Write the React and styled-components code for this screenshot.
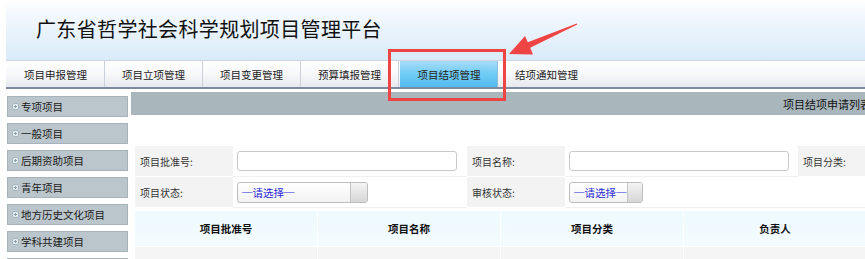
import React from 'react'
import styled, { createGlobalStyle } from 'styled-components'

const GlobalStyle = createGlobalStyle`
  body {
    margin: 0;
    background: #fff;
    overflow: hidden;
    font-family: "Noto Sans CJK SC", "Noto Sans", sans-serif;
    color: #1c1c1c;
  }
`

const tabs = ['项目申报管理', '项目立项管理', '项目变更管理', '预算填报管理', '项目结项管理', '结项通知管理']
const menu = ['专项项目', '一般项目', '后期资助项目', '青年项目', '地方历史文化项目', '学科共建项目', '其他项目']
const columns = ['项目批准号', '项目名称', '项目分类', '负责人']

function PlusBox() {
    return (
        <svg width="7" height="7" viewBox="0 0 7 7">
            <rect x="0.5" y="0.5" width="6" height="6" rx="1.5" fill="#e4ebef" stroke="#a5b6c0" />
            <path d="M2 3.5h3M3.5 2v3" stroke="#8aa0ad" strokeWidth="1" />
        </svg>
    )
}

function Select({ width }) {
    return (
        <SelectBox width={width}>
            <SelectText>─请选择─</SelectText>
            <SelectArrow />
        </SelectBox>
    )
}

export default function App() {
    return (
        <>
            <GlobalStyle />
            <Page>
                <Header>
                    <Title>广东省哲学社会科学规划项目管理平台</Title>
                </Header>
                <Nav>
                    {tabs.map((t, i) => (
                        <Tab key={t} active={i === 4} divider={i < 4}>{t}</Tab>
                    ))}
                </Nav>
                <Body>
                    <Sidebar>
                        {menu.map((m) => (
                            <MenuItem key={m}>
                                <PlusBox />
                                <span>{m}</span>
                            </MenuItem>
                        ))}
                    </Sidebar>
                    <Main>
                        <MainHeader>项目结项申请列表</MainHeader>
                        <Content>
                            <Form>
                                <Label>项目批准号:</Label>
                                <Field><TextInput /></Field>
                                <Label>项目名称:</Label>
                                <Field><TextInput /></Field>
                                <Label>项目分类:</Label>
                                <Field />
                                <Label>项目状态:</Label>
                                <Field><Select width={131} /></Field>
                                <Label>审核状态:</Label>
                                <Field><Select width={74} /></Field>
                                <Field wide />
                            </Form>
                            <Table>
                                {columns.map((c) => (
                                    <HeadCell key={c}>{c}</HeadCell>
                                ))}
                                {columns.map((c) => (
                                    <BodyCell key={c} />
                                ))}
                            </Table>
                        </Content>
                    </Main>
                </Body>
                <Marks width="865" height="259" viewBox="0 0 865 259">
                    <rect x="389.5" y="50.5" width="115" height="49" fill="none" stroke="#ef4444" strokeWidth="3" />
                    <polygon
                        points="509,54 525,36 527.8,42.3 576.8,23.4 577.3,24.6 530.2,47.7 533,54.5"
                        fill="#ef4444"
                    />
                </Marks>
            </Page>
        </>
    )
}

const Page = styled.div`
  position: relative;
  width: 872px;
  height: 259px;
  padding-left: 6px;
  box-sizing: border-box;
  overflow: hidden;
`

const Header = styled.div`
  height: 60px;
  background: linear-gradient(#ffffff 0%, #f1f7fd 30%, #d9eaf9 100%);
  display: flex;
  align-items: center;
`

const Title = styled.h1`
  margin: 0 0 4px 30px;
  font-size: 20px;
  font-weight: 400;
  letter-spacing: 0.35px;
  color: #111;
`

const Nav = styled.div`
  height: 26px;
  display: flex;
  padding-left: 1px;
  border-top: 1px solid #cdd6e0;
  border-bottom: 2px solid #7d899e;
  background: linear-gradient(#ffffff 0%, #f7f8fa 50%, #e6e9ef 100%);
`

const Tab = styled.div`
  flex: none;
  width: ${(p) => (p.active ? '98px' : '97px')};
  margin-left: ${(p) => (p.active ? '1px' : '0')};
  display: flex;
  align-items: center;
  justify-content: center;
  font-size: 10.5px;
  color: #222;
  border-right: ${(p) => (p.divider ? '1px solid #c9d0da' : '0')};
  background: ${(p) => (p.active ? 'linear-gradient(#a8dcf7 0%, #74cdf6 45%, #52bcef 100%)' : 'transparent')};
  box-shadow: ${(p) => (p.active ? 'inset -1px 0 0 #8ebcd8' : 'none')};
`

const Body = styled.div`
  display: flex;
  margin-top: 3px;
`

const Sidebar = styled.div`
  flex: none;
  width: 121px;
  margin-left: 1px;
  padding-top: 4px;
  display: flex;
  flex-direction: column;
  gap: 6px;
`

const MenuItem = styled.div`
  flex: none;
  height: 21px;
  box-sizing: border-box;
  display: flex;
  align-items: center;
  gap: 2px;
  padding-left: 4px;
  font-size: 10.5px;
  color: #1a1a1a;
  white-space: nowrap;
  background: #bac6cc;
  border: 1px solid #a6b3ba;
`

const Main = styled.div`
  flex: 1;
  min-width: 0;
  margin-left: 3px;
`

const MainHeader = styled.div`
  height: 23px;
  background: #a9b7bd;
  display: flex;
  align-items: center;
  justify-content: flex-end;
  padding-right: 1px;
  font-size: 11px;
  color: #111;
  white-space: nowrap;
`

const Content = styled.div`
  padding: 31px 0 0 4px;
`

const Form = styled.div`
  display: grid;
  grid-template-columns: 98px 234px 98px 233px 98px 1fr;
  grid-auto-rows: 31px;
`

const Label = styled.div`
  display: flex;
  align-items: center;
  padding-left: 5px;
  font-size: 10px;
  color: #333;
  white-space: nowrap;
  background: #f3f3f3;
  border-bottom: 1px solid #fff;
`

const Field = styled.div`
  display: flex;
  align-items: center;
  padding-left: 4px;
  border-bottom: 1px solid #f0f0f0;
  grid-column: ${(p) => (p.wide ? 'span 2' : 'auto')};
`

const TextInput = styled.div`
  width: 220px;
  height: 20px;
  box-sizing: border-box;
  border: 1px solid #c9c9c9;
  border-radius: 3px;
  background: #fff;
`

const SelectBox = styled.div`
  width: ${(p) => p.width}px;
  height: 21px;
  box-sizing: border-box;
  display: flex;
  border: 1px solid #bdbdbd;
  border-radius: 3px;
  overflow: hidden;
  background: linear-gradient(#ffffff, #f2f2f2);
`

const SelectText = styled.div`
  flex: 1;
  display: flex;
  align-items: center;
  padding-left: 4px;
  font-size: 10.5px;
  color: #2b2bd8;
  white-space: nowrap;
`

const SelectArrow = styled.div`
  flex: none;
  width: 16px;
  border-left: 1px solid #c4c4c4;
  background: linear-gradient(#f4f4f4, #d6d6d6);
`

const Table = styled.div`
  margin-top: 3px;
  display: grid;
  grid-template-columns: repeat(4, 182px);
  column-gap: 1px;
  row-gap: 1px;
`

const HeadCell = styled.div`
  height: 35px;
  display: flex;
  align-items: center;
  justify-content: center;
  font-size: 10.5px;
  font-weight: 700;
  color: #111;
  background: linear-gradient(#eefafe, #f3fbfe);
`

const BodyCell = styled.div`
  height: 20px;
  background: #f5f5f5;
`

const Marks = styled.svg`
  position: absolute;
  left: 0;
  top: 0;
  pointer-events: none;
`
